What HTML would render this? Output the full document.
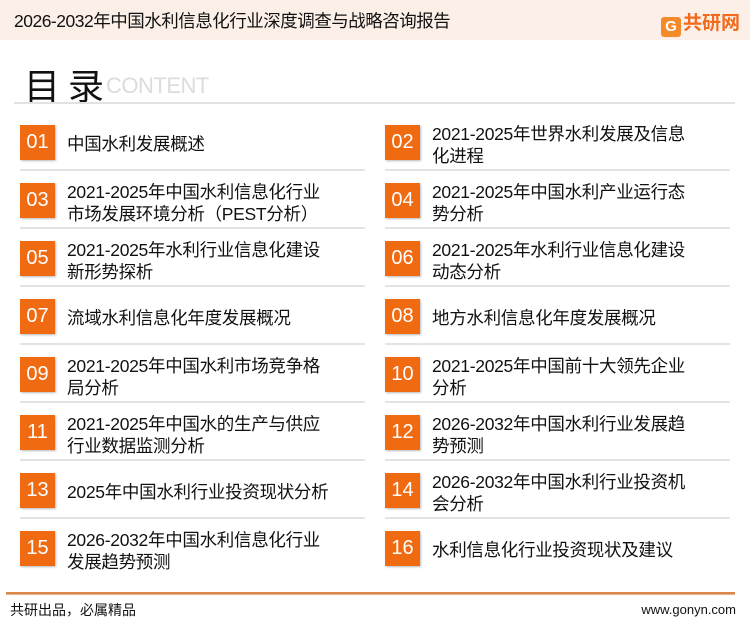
<!DOCTYPE html>
<html><head><meta charset="utf-8"><style>
*{margin:0;padding:0;box-sizing:border-box}
body{width:750px;height:622px;background:#fff;position:relative;overflow:hidden;font-family:"Liberation Sans","Noto Sans CJK SC",sans-serif;color:#111}
.hd{position:absolute;left:0;top:0;width:750px;height:40px;background:#fcefe8}
.hd .t{position:absolute;left:14px;top:8px;font-size:17.5px;letter-spacing:-0.5px}
.logo{position:absolute;right:10px;top:8px;font-size:19px;font-weight:bold;color:#f26b1d}
.logo b{display:inline-block;width:20px;height:20px;background:#f58a2a;border-radius:3px;color:#fff;font-size:15px;text-align:center;line-height:20px;vertical-align:-2px;margin-right:2px}
.ttl{position:absolute;left:24px;top:58px;font-size:36px;letter-spacing:8px}
.en{position:absolute;left:106px;top:73px;font-size:22px;color:#dcdcdc;letter-spacing:-0.5px}
.tl{position:absolute;left:14px;top:102px;width:721px;height:2px;background:#e2e2e2}
.row{position:absolute;width:350px;height:58px}
.box{position:absolute;left:6px;top:13px;width:35px;height:35px;background:#f06a12;color:#fff;font-size:20px;text-align:center;line-height:35px;box-shadow:1px 1px 2px #bbb}
.tx{position:absolute;left:53px;font-size:17.5px;line-height:22px;white-space:nowrap;letter-spacing:-0.3px}
.ln{position:absolute;left:6px;top:57px;width:345px;height:2px;background:#e4e4e4}
.fl{position:absolute;left:6px;top:592px;width:729px;height:3px;background:#d9874a;border-bottom:1px solid #e8b48c}
.ft{position:absolute;left:10px;top:600px;font-size:14px}
.fr{position:absolute;right:14px;top:602px;font-size:13px}
</style></head><body>
<div class="hd"><div class="t">2026-2032年中国水利信息化行业深度调查与战略咨询报告</div><div class="logo"><b>G</b>共研网</div></div>
<div class="ttl">目录</div><div class="en">CONTENT</div>
<div class="tl"></div>

<div class="row" style="left:14px;top:112px"><div class="box">01</div><div class="tx" style="top:21px">中国水利发展概述</div><div class="ln"></div></div>
<div class="row" style="left:379px;top:112px"><div class="box">02</div><div class="tx" style="top:11px">2021-2025年世界水利发展及信息<br>化进程</div><div class="ln"></div></div>

<div class="row" style="left:14px;top:170px"><div class="box">03</div><div class="tx" style="top:11px">2021-2025年中国水利信息化行业<br>市场发展环境分析（PEST分析）</div><div class="ln"></div></div>
<div class="row" style="left:379px;top:170px"><div class="box">04</div><div class="tx" style="top:11px">2021-2025年中国水利产业运行态<br>势分析</div><div class="ln"></div></div>

<div class="row" style="left:14px;top:228px"><div class="box">05</div><div class="tx" style="top:11px">2021-2025年水利行业信息化建设<br>新形势探析</div><div class="ln"></div></div>
<div class="row" style="left:379px;top:228px"><div class="box">06</div><div class="tx" style="top:11px">2021-2025年水利行业信息化建设<br>动态分析</div><div class="ln"></div></div>

<div class="row" style="left:14px;top:286px"><div class="box">07</div><div class="tx" style="top:21px">流域水利信息化年度发展概况</div><div class="ln"></div></div>
<div class="row" style="left:379px;top:286px"><div class="box">08</div><div class="tx" style="top:21px">地方水利信息化年度发展概况</div><div class="ln"></div></div>

<div class="row" style="left:14px;top:344px"><div class="box">09</div><div class="tx" style="top:11px">2021-2025年中国水利市场竞争格<br>局分析</div><div class="ln"></div></div>
<div class="row" style="left:379px;top:344px"><div class="box">10</div><div class="tx" style="top:11px">2021-2025年中国前十大领先企业<br>分析</div><div class="ln"></div></div>

<div class="row" style="left:14px;top:402px"><div class="box">11</div><div class="tx" style="top:11px">2021-2025年中国水的生产与供应<br>行业数据监测分析</div><div class="ln"></div></div>
<div class="row" style="left:379px;top:402px"><div class="box">12</div><div class="tx" style="top:11px">2026-2032年中国水利行业发展趋<br>势预测</div><div class="ln"></div></div>

<div class="row" style="left:14px;top:460px"><div class="box">13</div><div class="tx" style="top:21px">2025年中国水利行业投资现状分析</div><div class="ln"></div></div>
<div class="row" style="left:379px;top:460px"><div class="box">14</div><div class="tx" style="top:11px">2026-2032年中国水利行业投资机<br>会分析</div><div class="ln"></div></div>

<div class="row" style="left:14px;top:518px"><div class="box">15</div><div class="tx" style="top:11px">2026-2032年中国水利信息化行业<br>发展趋势预测</div></div>
<div class="row" style="left:379px;top:518px"><div class="box">16</div><div class="tx" style="top:21px">水利信息化行业投资现状及建议</div></div>

<div class="fl"></div>
<div class="ft">共研出品，必属精品</div>
<div class="fr">www.gonyn.com</div>
</body></html>
